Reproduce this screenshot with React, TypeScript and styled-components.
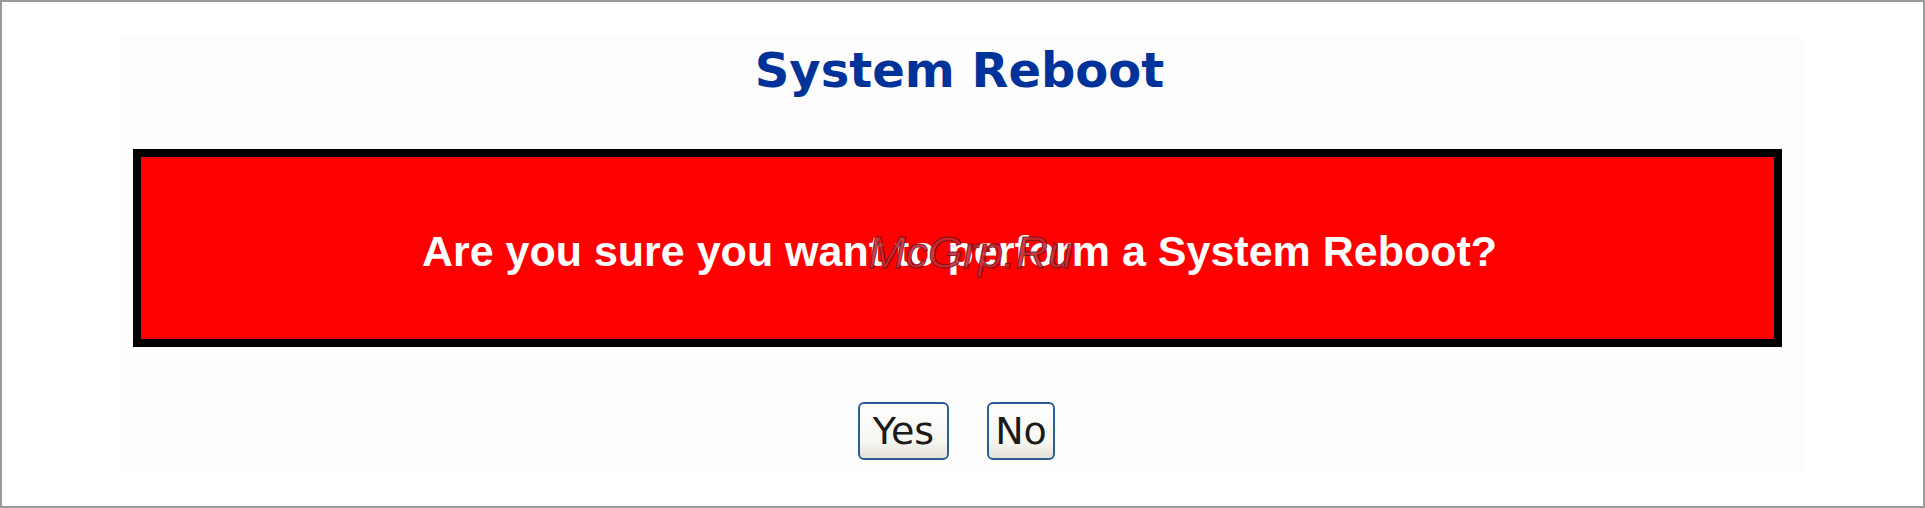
import React from 'react';
import styled, { createGlobalStyle } from 'styled-components';

const GlobalStyle = createGlobalStyle`
  html, body {
    margin: 0;
    padding: 0;
    background: #ffffff;
  }
  * {
    box-sizing: border-box;
  }
`;

const Frame = styled.div`
  width: 1925px;
  height: 508px;
  border: 2px solid #9a9a9a;
  background: #ffffff;
  padding: 34px 0 0 119px;
`;

const Panel = styled.main`
  width: 1682px;
  height: 436px;
  background: #fdfdfd;
  display: flex;
  flex-direction: column;
  padding: 0 21px 0 12px;
`;

const Title = styled.h1`
  margin: 0;
  padding-top: 4px;
  height: 113px;
  text-align: center;
  font-family: 'DejaVu Sans', Verdana, sans-serif;
  font-size: 48px;
  font-weight: 700;
  line-height: 60px;
  color: #003399;
  padding-left: 4px;
`;

const Warning = styled.section`
  position: relative;
  height: 198px;
  border: 8px solid #000000;
  background: #ff0000;
  display: flex;
  align-items: center;
  justify-content: center;
  padding-top: 6px;
`;

const Message = styled.p`
  margin: 0;
  font-family: 'Liberation Sans', Arial, sans-serif;
  font-size: 43px;
  font-weight: 700;
  color: #ffffff;
  padding-left: 4px;
`;

/* site watermark laid over the banner */
const Stamp = styled.span`
  position: absolute;
  left: 727px;
  top: 70px;
  font-family: 'Liberation Sans', Arial, sans-serif;
  font-style: italic;
  font-size: 45px;
  letter-spacing: 0px;
  color: rgba(205, 40, 50, 0.92);
  -webkit-text-stroke: 1px rgba(90, 20, 30, 0.8);
  pointer-events: none;
`;

const Actions = styled.div`
  display: flex;
  justify-content: center;
  gap: 38px;
  margin-top: 55px;
  padding-right: 2px;
`;

const Button = styled.button<{ $width: number }>`
  width: ${({ $width }) => $width}px;
  height: 58px;
  padding: 0;
  border: 2px solid #2c5d95;
  border-radius: 6px;
  background: linear-gradient(180deg, #ffffff 0%, #f6f5f0 70%, #e4e2d8 100%);
  font-family: 'DejaVu Sans', Tahoma, sans-serif;
  font-size: 38px;
  font-weight: 400;
  color: #1a1a1a;
  cursor: pointer;
`;

const App = () => {
  return (
    <>
      <GlobalStyle />
      <Frame>
        <Panel>
          <Title>System Reboot</Title>
          <Warning>
            <Message>Are you sure you want to perform a System Reboot?</Message>
            <Stamp>McGrp.Ru</Stamp>
          </Warning>
          <Actions>
            <Button $width={91}>Yes</Button>
            <Button $width={68}>No</Button>
          </Actions>
        </Panel>
      </Frame>
    </>
  );
};

export default App;
